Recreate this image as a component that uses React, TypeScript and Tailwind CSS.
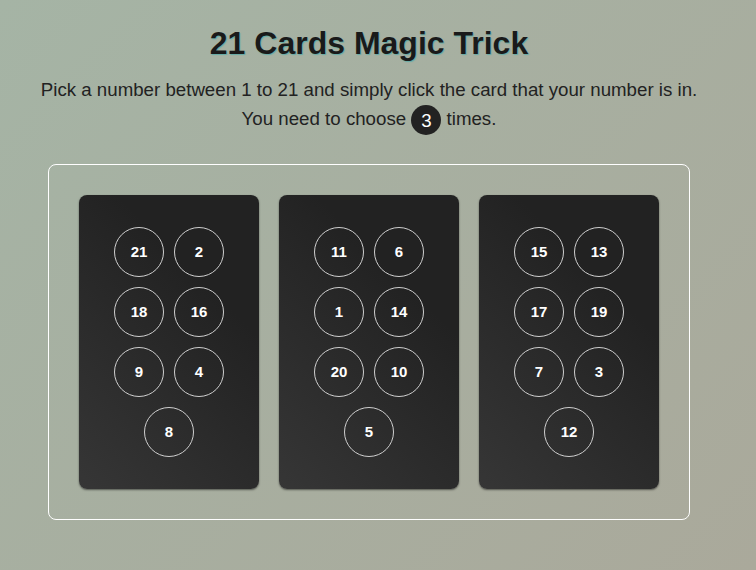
const cards: number[][] = [
  [21, 2, 18, 16, 9, 4, 8],
  [11, 6, 1, 14, 20, 10, 5],
  [15, 13, 17, 19, 7, 3, 12],
];

function Card({ nums }: { nums: number[] }) {
  return (
    <div className="w-[180px] h-[294px] rounded-lg bg-[linear-gradient(45deg,#363636,#222222_70%)] shadow-[0_1px_2px_rgba(0,0,0,0.5)] flex items-center justify-center cursor-pointer">
      <div className="w-[110px] flex flex-wrap justify-center gap-[10px]">
        {nums.map((n) => (
          <div
            key={n}
            className="w-[50px] h-[50px] rounded-full border border-[#cfcfcf] flex items-center justify-center text-white font-bold text-[15px]"
          >
            {n}
          </div>
        ))}
      </div>
    </div>
  );
}

export default function App() {
  return (
    <div className="min-h-screen w-full bg-[linear-gradient(135deg,#a5b4a5,#aaa99b)] font-['Liberation_Sans',Arial,sans-serif] text-[#222]">
      <div className="w-[738px] flex flex-col items-center pt-[24px]">
        <h1 className="text-[32px] font-bold text-[#1a1a1a] [text-shadow:1px_1px_1px_rgba(70,170,170,0.7)] leading-[38px]">
          21 Cards Magic Trick
        </h1>
        <p className="mt-[13px] text-[18.7px] leading-[29px] text-center">
          Pick a number between 1 to 21 and simply click the card that your number is in.
          <br />
          You need to choose{" "}
          <span className="inline-flex w-[30px] h-[30px] rounded-full bg-[#222] text-white items-center justify-center align-middle">
            3
          </span>{" "}
          times.
        </p>
        <div className="mt-[29px] border border-white rounded-lg p-[30px] flex gap-[20px]">
          {cards.map((c, i) => (
            <Card key={i} nums={c} />
          ))}
        </div>
      </div>
    </div>
  );
}
